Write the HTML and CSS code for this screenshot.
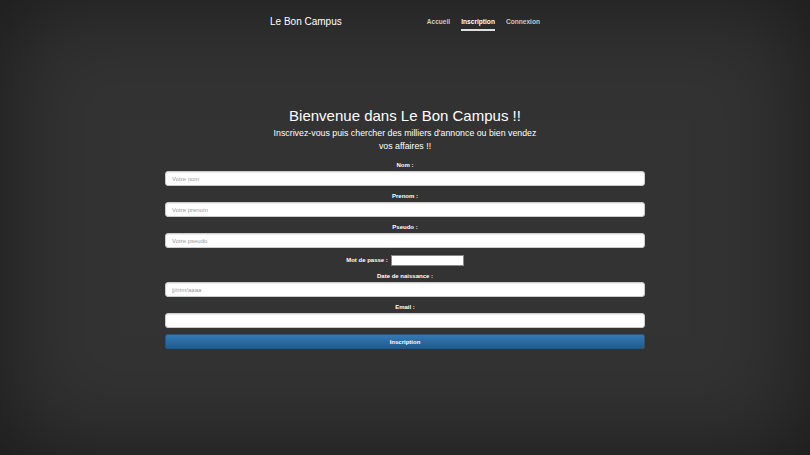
FILE: index.html
```html
<!DOCTYPE html>
<html lang="fr">
<head>
  <meta charset="UTF-8" />
  <title>Inscription – Le Bon Campus</title>
  <link rel="stylesheet" href="styles.css">
</head>
<body>
  <header class="masthead">
    <h3 class="brand">Le Bon Campus</h3>
    <nav class="nav">
      <a href="index.html">Accueil</a>
      <a href="inscription.html" class="active">Inscription</a>
      <a href="connexion.html">Connexion</a>
    </nav>
  </header>

  <main class="cover">
    <h1>Bienvenue dans Le Bon Campus !!</h1>
    <p class="lead">Inscrivez-vous puis chercher des milliers d'annonce ou bien vendez vos affaires !!</p>

    <form class="signup">
      <div class="form-group">
        <label for="nom">Nom :</label>
        <input type="text" id="nom" class="form-control" placeholder="Votre nom" />
      </div>
      <div class="form-group">
        <label for="prenom">Prenom :</label>
        <input type="text" id="prenom" class="form-control" placeholder="Votre prenom" />
      </div>
      <div class="form-group">
        <label for="pseudo">Pseudo :</label>
        <input type="text" id="pseudo" class="form-control" placeholder="Votre pseudo" />
      </div>
      <div class="form-group inline">
        <label for="mdp">Mot de passe :</label>
        <input type="password" id="mdp" class="plain" />
      </div>
      <div class="form-group">
        <label for="naissance">Date de naissance :</label>
        <input type="text" id="naissance" class="form-control" placeholder="jj/mm/aaaa" />
      </div>
      <div class="form-group">
        <label for="email">Email :</label>
        <input type="email" id="email" class="form-control" />
      </div>
      <button type="submit" class="btn-primary">Inscription</button>
    </form>
  </main>
</body>
</html>
```

FILE: styles.css
```css
html {
  height: 100%;
}

body {
  margin: 0;
  min-height: 100%;
  font-family: "Liberation Sans", Arial, sans-serif;
  color: #fff;
  background-color: #333;
  box-shadow: inset 0 0 100px rgba(0, 0, 0, .5);
}

.masthead {
  width: 270px;
  margin: 0 auto;
  padding-top: 16px;
  display: flex;
  justify-content: space-between;
  align-items: flex-start;
}

.brand {
  margin: 0;
  font-size: 10px;
  line-height: 12px;
  font-weight: normal;
}

.nav {
  display: flex;
  gap: 11px;
  margin-top: 2px;
}

.nav a {
  color: rgba(255, 255, 255, .75);
  text-decoration: none;
  font-size: 6.6px;
  font-weight: bold;
  line-height: 8px;
  padding-bottom: 3px;
  border-bottom: 2px solid transparent;
}

.nav a.active {
  color: #fff;
  border-bottom-color: rgba(255, 255, 255, .85);
}

.cover {
  text-align: center;
  padding-top: 76px;
}

.cover h1 {
  margin: 0;
  font-size: 15px;
  line-height: 18px;
  font-weight: normal;
}

.lead {
  width: 272px;
  margin: 2px auto 8px;
  font-size: 8.8px;
  line-height: 13px;
}

.signup {
  width: 480px;
  margin: 0 auto;
}

.form-group {
  margin-bottom: 6px;
}

.form-group label {
  display: block;
  font-size: 6px;
  font-weight: bold;
  line-height: 8px;
  margin-bottom: 2px;
}

.form-control {
  display: block;
  box-sizing: border-box;
  width: 100%;
  height: 15px;
  padding: 0 6px;
  font-family: inherit;
  font-size: 6px;
  color: #555;
  background: #fff;
  border: 1px solid #ccc;
  border-radius: 3px;
  box-shadow: inset 0 1px 1px rgba(0, 0, 0, .075);
}

.form-control::placeholder {
  color: #999;
}

.form-group.inline {
  display: flex;
  justify-content: center;
  align-items: center;
  height: 12px;
}

.form-group.inline label {
  display: inline;
  margin: 0 3px 0 0;
}

.plain {
  box-sizing: border-box;
  width: 73px;
  height: 11px;
  padding: 0 2px;
  font-size: 6px;
  border: 1px solid #888;
  background: #fff;
}

.btn-primary {
  display: block;
  box-sizing: border-box;
  width: 100%;
  height: 15px;
  padding: 0;
  font-family: inherit;
  font-size: 6px;
  font-weight: bold;
  color: #fff;
  background-image: linear-gradient(to bottom, #337ab7 0, #265a88 100%);
  border: 1px solid #245580;
  border-radius: 3px;
  cursor: pointer;
}
```
